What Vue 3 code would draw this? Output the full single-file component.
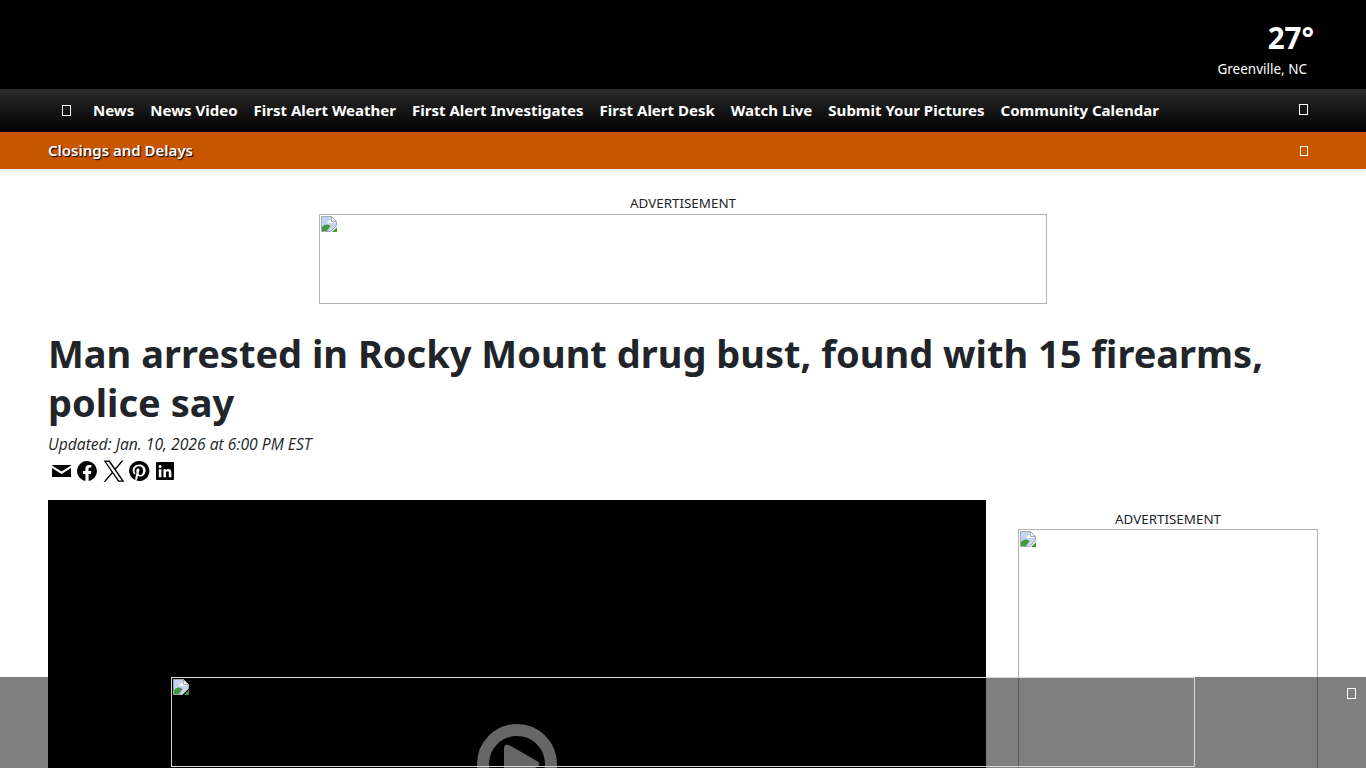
<script setup>
const navLinks = [
  'News',
  'News Video',
  'First Alert Weather',
  'First Alert Investigates',
  'First Alert Desk',
  'Watch Live',
  'Submit Your Pictures',
  'Community Calendar'
]
</script>

<template>
  <div class="page">
    <!-- the broken image picture, used in the three ad slots -->
    <svg class="defs" width="0" height="0">
      <symbol id="broken-img" viewBox="0 0 16 16">
        <path d="M.5.500h10l5 5v4l-6 6H.5z" fill="#c6d4f4" stroke="#a3a9b5" />
        <path d="M7 5.500c1-2 3-2 4-1 2-.5 3.500 1 3 2.500H8c-1.500 0-2-1-1-1.500z" fill="#fff" />
        <path d="M10.500.5v5h5z" fill="#f4f6fb" stroke="#a3a9b5" />
        <path d="M1 15v-4c3-3 6-3 8.500-1l-3.500 5z" fill="#46993a" />
        <path d="M16 11v5h-5z" fill="#46993a" />
      </symbol>
    </svg>

    <header class="top">
      <div class="weather">
        <div class="temp">27°</div>
        <div class="city">Greenville, NC</div>
      </div>
    </header>

    <nav class="nav">
      <span class="tofu nav-menu"></span>
      <a v-for="link in navLinks" :key="link" class="nav-link">{{ link }}</a>
      <span class="tofu nav-search"></span>
    </nav>

    <div class="alert">
      <span class="alert-text">Closings and Delays</span>
      <span class="tofu alert-close"></span>
    </div>

    <main class="main">
      <div class="ad-top">
        <div class="ad-label">ADVERTISEMENT</div>
        <div class="ad-box leaderboard">
          <svg class="broken" width="16" height="16"><use href="#broken-img" /></svg>
        </div>
      </div>

      <h1 class="headline">Man arrested in Rocky Mount drug bust, found with 15 firearms, police say</h1>
      <div class="updated">Updated: Jan. 10, 2026 at 6:00 PM EST</div>

      <div class="share">
        <svg viewBox="0 0 24 24" width="24" height="24"><path d="M3 6h19v.6l-9.500 6L3 6.600zM3 9l9.500 6L22 9v9H3z" /></svg>
        <svg viewBox="0 0 24 24" width="24" height="24"><path d="M22 12a10 10 0 1 0-11.600 9.900v-7H7.900V12h2.500V9.800c0-2.500 1.500-3.900 3.800-3.900 1.100 0 2.200.2 2.200.2v2.500h-1.300c-1.200 0-1.600.8-1.600 1.600V12h2.800l-.4 2.900h-2.300v7A10 10 0 0 0 22 12z" /></svg>
        <svg viewBox="0 0 24 24" width="24" height="24"><path d="M14.900 10.500 22.600 1.500h-1.800l-6.700 7.800L8.800 1.500H2.600l8.100 11.800-8.100 9.400h1.800l7.100-8.200 5.700 8.200h6.200zM5.100 2.900h2.800l12.900 18.500H18z" /></svg>
        <svg viewBox="0 0 24 24" width="24" height="24"><path d="M12 2a10 10 0 0 0-3.600 19.300c-.1-.8-.2-2 0-2.900l1.200-5s-.3-.6-.3-1.500c0-1.400.8-2.400 1.800-2.400.9 0 1.300.6 1.300 1.400 0 .9-.5 2.100-.8 3.300-.2 1 .5 1.800 1.500 1.800 1.800 0 3.100-1.900 3.100-4.600 0-2.400-1.700-4.100-4.200-4.100-2.800 0-4.500 2.100-4.500 4.300 0 .9.300 1.800.8 2.300.1.100.1.200.1.300l-.3 1.200c0 .2-.2.200-.4.100-1.200-.6-2-2.400-2-3.900 0-3.200 2.300-6.100 6.700-6.100 3.500 0 6.200 2.500 6.200 5.800 0 3.500-2.200 6.300-5.200 6.300-1 0-2-.5-2.300-1.100l-.6 2.400c-.2.900-.8 2-1.200 2.600A10 10 0 1 0 12 2z" /></svg>
        <svg viewBox="0 0 24 24" width="24" height="24"><path d="M4 3h16a1 1 0 0 1 1 1v16a1 1 0 0 1-1 1H4a1 1 0 0 1-1-1V4a1 1 0 0 1 1-1zm1.800 7.300v8h2.600v-8zM7.100 6a1.500 1.500 0 1 0 0 3 1.500 1.500 0 0 0 0-3zm3.300 4.300v8H13v-4.200c0-1.200.5-1.900 1.500-1.900s1.300.7 1.300 1.900v4.200h2.600v-4.800c0-2.300-1.200-3.400-3-3.400-1.200 0-2 .6-2.400 1.300v-1.100z" fill-rule="evenodd" /></svg>
      </div>

      <div class="content">
        <div class="video">
          <svg class="play" viewBox="0 0 80 80" width="80" height="80">
            <circle cx="40" cy="40" r="34" fill="none" stroke="#ccc" stroke-width="12" />
            <path d="M27 24c0-3 2-4 5-3l28 16c3 2 3 4 0 6L32 59c-3 1-5 0-5-3z" fill="#ccc" />
          </svg>
        </div>
        <aside class="side">
          <div class="ad-label">ADVERTISEMENT</div>
          <div class="ad-box rectangle">
            <svg class="broken" width="16" height="16"><use href="#broken-img" /></svg>
          </div>
        </aside>
      </div>
    </main>

    <div class="sticky">
      <div class="sticky-ad">
        <svg class="broken" width="16" height="16"><use href="#broken-img" /></svg>
      </div>
      <span class="tofu sticky-close"></span>
    </div>
  </div>
</template>

<style>
html, body {
  margin: 0;
  height: 100%;
  overflow: hidden;
  background: #fff;
}
</style>

<style scoped>
* {
  box-sizing: border-box;
}

.page {
  font-family: "Noto Sans", "Open Sans", sans-serif;
  color: #212529;
}
.defs {
  display: none;
}

/* top black band */
.top {
  height: 89px;
  background: #000;
  display: flex;
  justify-content: flex-end;
  padding-right: 48px;
}
.weather {
  width: 104px;
  color: #fff;
  padding-top: 19px;
}
.temp {
  font-weight: 700;
  font-size: 29.500px;
  line-height: 38px;
  text-align: right;
  padding-right: 4px;
}
.city {
  font-size: 13.500px;
  line-height: 18px;
  margin-top: 3px;
  white-space: nowrap;
  text-align: right;
  padding-right: 11px;
}

/* nav */
.nav {
  height: 43px;
  background: linear-gradient(#2b2b2b, #000);
  display: flex;
  align-items: center;
  padding-left: 62px;
  padding-right: 58px;
  gap: 16px;
}
.nav-link {
  color: #fff;
  font-weight: 700;
  font-size: 15.030px;
  white-space: nowrap;
  margin-bottom: 2px;
}
.tofu {
  display: block;
  width: 9px;
  height: 11px;
  border: 1px solid #fff;
  flex: none;
}
.nav-menu {
  margin-right: 6px;
}
.nav-search {
  margin-left: auto;
  margin-bottom: 2px;
}

/* orange bar */
.alert {
  height: 37px;
  background: #c85500;
  box-shadow: 0 2px 2px #f6e9dd;
  display: flex;
  align-items: center;
  justify-content: space-between;
  padding: 0 58px 0 48px;
}
.alert-text {
  color: #fff;
  font-size: 15px;
  font-weight: 600;
  text-shadow: 1px 1px 1px #000;
  margin-bottom: 2px;
}
.alert-close {
  width: 8px;
  height: 10px;
}

.main {
  padding: 0 48px;
}
.ad-top {
  padding-top: 25px;
  display: flex;
  flex-direction: column;
  align-items: center;
}
.ad-label {
  font-size: 13.400px;
  line-height: 20px;
  text-align: center;
  color: #212529;
}
.ad-top .ad-label {
  margin: -1px 0 1px;
}
.ad-box {
  border: 1px solid #b3b3b3;
  padding: 1px;
}
.leaderboard {
  width: 728px;
  height: 90px;
}
.broken {
  display: block;
}

.headline {
  margin: 25px 0 0;
  font-size: 38px;
  line-height: 49px;
  font-weight: 700;
  color: #212529;
}
.updated {
  margin-top: 5px;
  font-family: "Open Sans", "Noto Sans", sans-serif;
  font-size: 15.700px;
  line-height: 24px;
  font-style: italic;
}
.share {
  display: flex;
  height: 26px;
  margin-top: 2px;
  align-items: center;
}
.share svg {
  display: block;
  fill: #000;
  margin: 0 1px;
}

.content {
  display: flex;
  justify-content: space-between;
  margin-top: 16px;
}
.video {
  width: 938px;
  height: 528px;
  background: #000;
  display: flex;
  justify-content: center;
  align-items: center;
}
.play {
  display: block;
  flex: none;
}
.side {
  width: 300px;
  padding-top: 9px;
}
.rectangle {
  width: 300px;
  height: 250px;
}

/* sticky bottom ad */
.sticky {
  position: fixed;
  left: 0;
  right: 0;
  bottom: 0;
  height: 91px;
  background: rgba(0, 0, 0, 0.5);
  display: flex;
  justify-content: center;
}
.sticky-ad {
  width: 1024px;
  height: 90px;
  border: 1px solid #d9d9d9;
  padding: 1px;
}
.sticky-close {
  position: absolute;
  right: 10px;
  top: 11px;
}
</style>
